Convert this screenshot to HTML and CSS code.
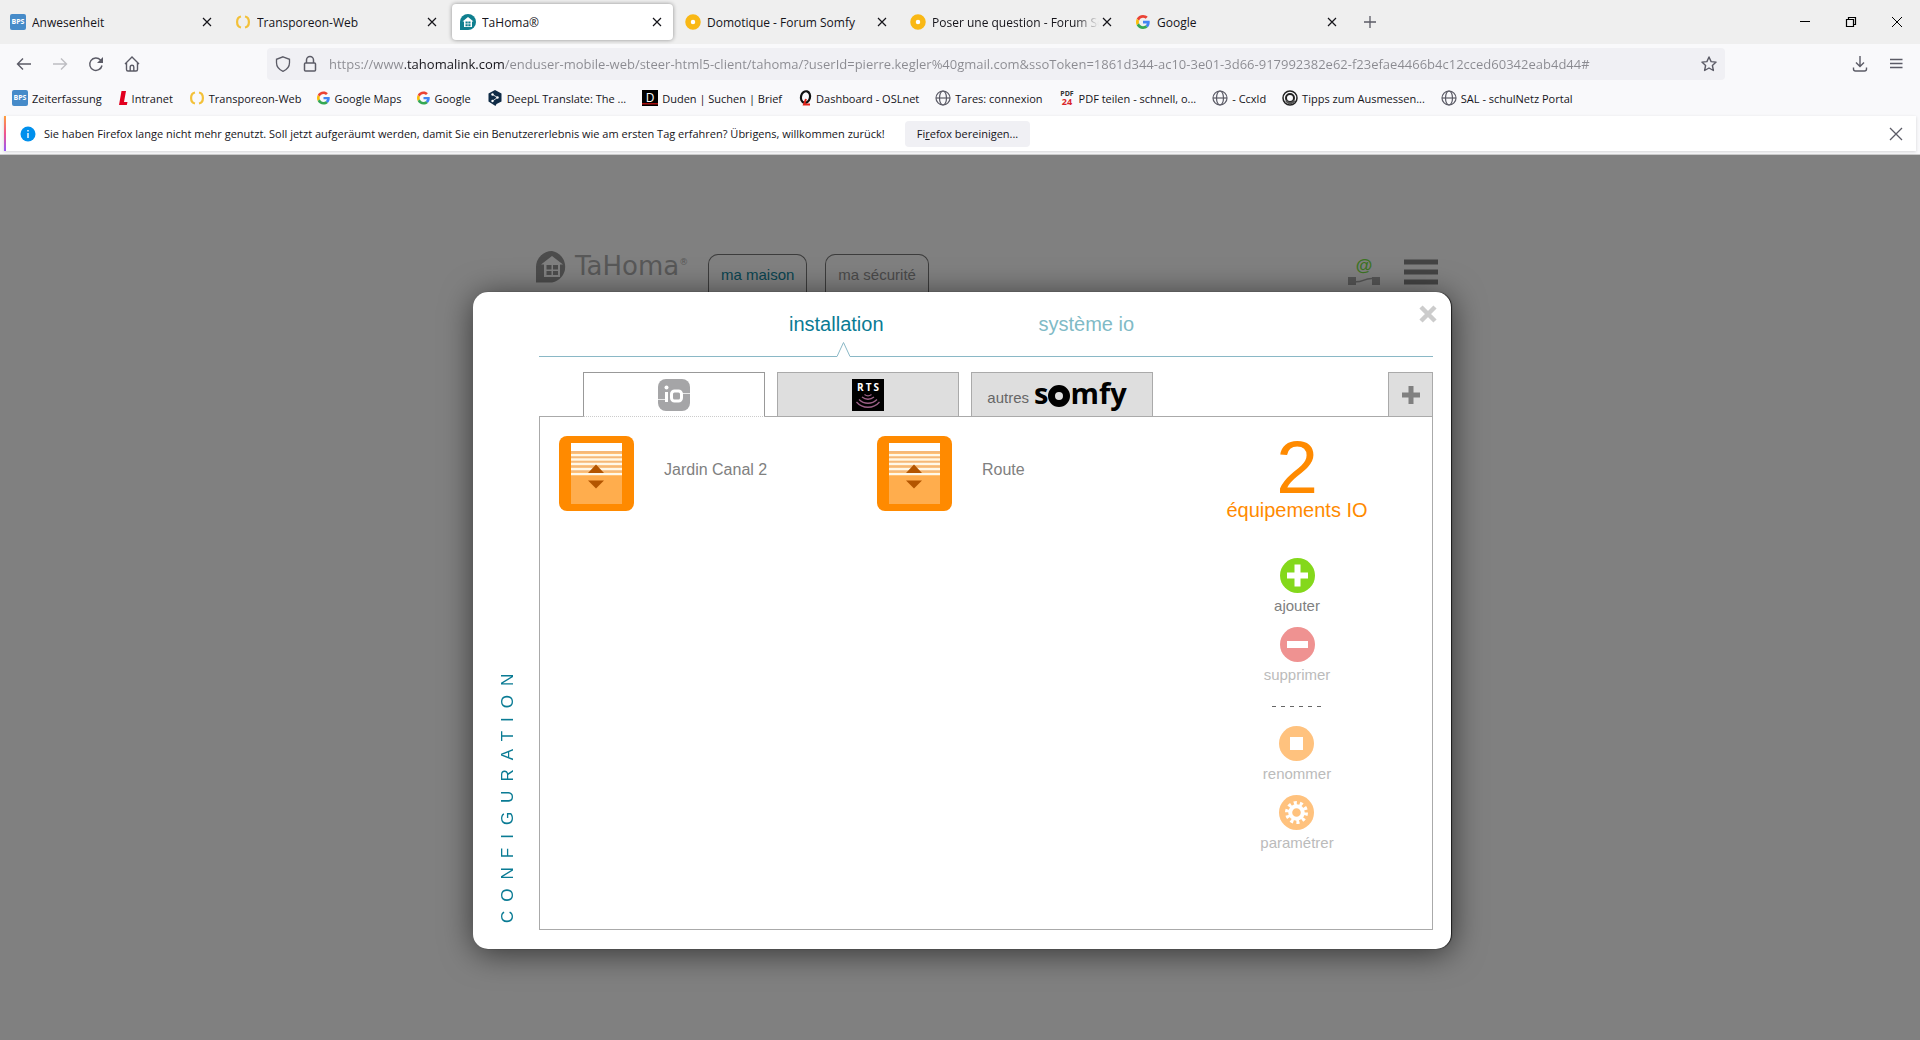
FILE: index.html
```html
<!DOCTYPE html>
<html lang="fr">
<head>
    <meta charset="UTF-8">
    <meta name="viewport" content="width=device-width, initial-scale=1.0">
    <title>TaHoma®</title>
    <link rel="stylesheet" href="styles.css">
</head>
<body>

    <!-- Shared icons -->
    <svg class="sprite" aria-hidden="true">
        <symbol id="bps" viewBox="0 0 16 16">
            <rect width="16" height="16" rx="2" fill="#468bc9"/>
            <text x="8" y="10" text-anchor="middle" font-family="Open Sans" font-weight="700" font-size="7" fill="#fff">BPS</text>
        </symbol>
        <symbol id="transporeon" viewBox="0 0 16 16">
            <path d="M6 2.500C.8 3.500.8 12.500 6 13.500M10 2.500c5.200 1 5.200 10 0 11" fill="none" stroke="#f3c13a" stroke-width="2.200"/>
        </symbol>
        <symbol id="google" viewBox="0 0 48 48">
            <path fill="#ea4335" d="M24 9.500c3.500 0 6.700 1.200 9.200 3.600l6.900-6.900C35.900 2.400 30.500 0 24 0 14.600 0 6.500 5.400 2.600 13.200l8 6.200C12.400 13.700 17.700 9.500 24 9.500z"/>
            <path fill="#4285f4" d="M47 24.500c0-1.600-.2-3.100-.4-4.500H24v9h12.900c-.6 3-2.300 5.500-4.800 7.200l7.700 6C44.400 38 47 31.800 47 24.500z"/>
            <path fill="#fbbc05" d="M10.500 28.600c-.5-1.500-.8-3-.8-4.600s.3-3.100.8-4.600l-8-6.200C.9 16.500 0 20.100 0 24s.9 7.500 2.600 10.800z"/>
            <path fill="#34a853" d="M24 48c6.500 0 11.900-2.100 15.900-5.800l-7.700-6c-2.200 1.400-4.900 2.300-8.200 2.300-6.300 0-11.600-4.200-13.500-9.900l-8 6.200C6.500 42.600 14.600 48 24 48z"/>
        </symbol>
        <symbol id="globe" viewBox="0 0 16 16">
            <g fill="none" stroke="#5b5b66" stroke-width="1.200">
                <circle cx="8" cy="8" r="7"/>
                <ellipse cx="8" cy="8" rx="3.500" ry="7"/>
                <path d="M1 8h14"/>
            </g>
        </symbol>
        <symbol id="somfy" viewBox="0 0 16 16">
            <circle cx="8" cy="8" r="5" fill="#fff" stroke="#f9b815" stroke-width="5.500"/>
        </symbol>
        <symbol id="cross" viewBox="0 0 16 16">
            <path d="M4 4l8 8M12 4l-8 8" fill="none" stroke="currentColor" stroke-width="1.200"/>
        </symbol>
        <symbol id="shutter" viewBox="0 0 75 75">
            <rect width="75" height="75" rx="8" fill="#ff8a00"/>
            <rect x="12" y="7" width="51" height="61" fill="#ffad4d"/>
            <rect x="12" y="7" width="51" height="8" fill="#fff"/>
            <path d="M12 16h51M12 21h51M12 26h51M12 30.500h51M12 35h51" stroke="#f5b877" stroke-width="2"/>
            <path d="M12 19h51M12 23.500h51M12 28h51M12 33h51M12 38h51" stroke="#fff8e8" stroke-width="2.500"/>
            <path d="M29 37l8-8.500 8 8.500zM29 44.500h16l-8 8z" fill="#b35500"/>
        </symbol>
    </svg>

    <!-- Browser tabs -->
    <div class="tab-bar">
        <div class="tab"><svg class="icon"><use href="#bps"/></svg><span class="tab-title">Anwesenheit</span><button class="tab-close" aria-label="Tab schließen"><svg class="icon"><use href="#cross"/></svg></button></div>
        <div class="tab"><svg class="icon"><use href="#transporeon"/></svg><span class="tab-title">Transporeon-Web</span><button class="tab-close" aria-label="Tab schließen"><svg class="icon"><use href="#cross"/></svg></button></div>
        <div class="tab active">
            <svg class="icon" viewBox="0 0 16 16"><path d="M8 0a8 8 0 0 1 0 16H0V8a8 8 0 0 1 8-8z" fill="#0f7f8f"/><path d="M8 3L2.500 7.500h1.500V13h8V7.500h1.500z" fill="#fff"/><path d="M5.500 7.500h2.200v2H5.500zM8.300 7.500h2.200v2H8.300zM5.500 10.200h2.200v2H5.500zM8.300 10.200h2.200v2H8.300z" fill="#0f7f8f"/></svg>
            <span class="tab-title">TaHoma®</span><button class="tab-close" aria-label="Tab schließen"><svg class="icon"><use href="#cross"/></svg></button>
        </div>
        <div class="tab"><svg class="icon"><use href="#somfy"/></svg><span class="tab-title">Domotique - Forum Somfy</span><button class="tab-close" aria-label="Tab schließen"><svg class="icon"><use href="#cross"/></svg></button></div>
        <div class="tab"><svg class="icon"><use href="#somfy"/></svg><span class="tab-title fade">Poser une question - Forum Somfy</span><button class="tab-close" aria-label="Tab schließen"><svg class="icon"><use href="#cross"/></svg></button></div>
        <div class="tab"><svg class="icon google-tab"><use href="#google"/></svg><span class="tab-title">Google</span><button class="tab-close" aria-label="Tab schließen"><svg class="icon"><use href="#cross"/></svg></button></div>
        <button class="new-tab" aria-label="Neuer Tab"><svg class="icon" viewBox="0 0 16 16"><path d="M8 2v12M2 8h12" stroke="#5b5b66" stroke-width="1.300"/></svg></button>
        <div class="window-buttons">
            <button aria-label="Minimieren"><svg class="icon" viewBox="0 0 16 16"><path d="M3 7.500h10" stroke="#000"/></svg></button>
            <button aria-label="Verkleinern"><svg class="icon" viewBox="0 0 16 16"><path d="M3.500 5.500h7v7h-7zM5.500 5.500v-2h7v7h-2" fill="none" stroke="#000" stroke-width="1.200"/></svg></button>
            <button aria-label="Schließen"><svg class="icon" viewBox="0 0 16 16"><path d="M3 3l10 10M13 3L3 13" stroke="#000" stroke-width="1"/></svg></button>
        </div>
    </div>

    <!-- Navigation bar -->
    <div class="nav-bar">
        <div class="nav-buttons">
            <button aria-label="Zurück"><svg class="icon" viewBox="0 0 16 16"><path d="M15 8H1.500M7 2.500L1.500 8 7 13.500" fill="none" stroke="#5b5b66" stroke-width="1.400"/></svg></button>
            <button aria-label="Vor"><svg class="icon" viewBox="0 0 16 16"><path d="M1 8h13.500M9 2.500L14.500 8 9 13.500" fill="none" stroke="#bdbdc2" stroke-width="1.400"/></svg></button>
            <button aria-label="Neu laden"><svg class="icon" viewBox="0 0 16 16"><path d="M14 9.500A6.200 6.200 0 1 1 12.500 4L14 5.500" fill="none" stroke="#5b5b66" stroke-width="1.400"/><path d="M15 1v6H9z" fill="#5b5b66"/></svg></button>
            <button aria-label="Startseite"><svg class="icon" viewBox="0 0 16 16"><path d="M1 8l7-7 7 7M2.500 7v6.500a1.500 1.500 0 0 0 1.500 1.500h8a1.500 1.500 0 0 0 1.500-1.500V7M6.200 15v-4a1.800 1.800 0 0 1 3.600 0v4" fill="none" stroke="#5b5b66" stroke-width="1.400"/></svg></button>
        </div>
        <div class="url-bar">
            <svg class="icon" viewBox="0 0 16 16"><path d="M8 .8l6.500 2.500v3.500c0 4-3 7-6.500 8.500-3.500-1.500-6.500-4.500-6.500-8.500V3.300z" fill="none" stroke="#5b5b66" stroke-width="1.300"/></svg>
            <svg class="icon" viewBox="0 0 16 16"><path d="M4.500 7V4a3.500 3.500 0 0 1 7 0v3M3.500 7h9a1 1 0 0 1 1 1v6a1 1 0 0 1-1 1h-9a1 1 0 0 1-1-1V8a1 1 0 0 1 1-1z" fill="none" stroke="#5b5b66" stroke-width="1.500"/></svg>
            <input class="url-input" type="text" aria-label="Adresse" value="https://www.tahomalink.com/enduser-mobile-web/steer-html5-client/tahoma/?userId=pierre.kegler%40gmail.com&amp;ssoToken=1861d344-ac10-3e01-3d66-917992382e62-f23efae4466b4c12cced60342eab4d44#">
            <button aria-label="Lesezeichen hinzufügen"><svg class="icon" viewBox="0 0 16 16"><path d="M8 1l2.100 4.600 5 .5-3.700 3.400 1 5L8 12l-4.400 2.500 1-5L.9 6.100l5-.5z" fill="none" stroke="#5b5b66" stroke-width="1.400" stroke-linejoin="round"/></svg></button>
        </div>
        <div class="nav-tools">
            <button aria-label="Downloads"><svg class="icon" viewBox="0 0 16 16"><path d="M8 0v10.500M4 6.500l4 4 4-4M1.500 11.500V13a2 2 0 0 0 2 2h9a2 2 0 0 0 2-2v-1.500" fill="none" stroke="#5b5b66" stroke-width="1.400"/></svg></button>
            <button aria-label="Menü"><svg class="icon" viewBox="0 0 16 16"><path d="M2 3.500h12.500M2 7.500h12.500M2 11.500h12.500" stroke="#5b5b66" stroke-width="1.300"/></svg></button>
        </div>
    </div>

    <!-- Bookmarks -->
    <nav class="bookmarks">
        <a href="#"><svg class="icon"><use href="#bps"/></svg>Zeiterfassung</a>
        <a href="#"><svg class="icon narrow" viewBox="0 0 10 16"><path d="M3.500 1H8L6 12h3.500l-.7 3H1z" fill="#e2001f"/></svg>Intranet</a>
        <a href="#"><svg class="icon"><use href="#transporeon"/></svg>Transporeon-Web</a>
        <a href="#"><svg class="icon small"><use href="#google"/></svg>Google Maps</a>
        <a href="#"><svg class="icon small"><use href="#google"/></svg>Google</a>
        <a href="#"><svg class="icon" viewBox="0 0 16 16"><path d="M8 0l6.500 3.500v8L9.500 14l-1 2L1.500 11.500v-8z" fill="#0f2b46"/><path d="M5.500 4.500l5 3-5 3.500" fill="none" stroke="#fff" stroke-width=".8"/><circle cx="5.500" cy="4.500" r="1.200" fill="#fff"/><circle cx="10.500" cy="7.500" r="1.200" fill="#fff"/><circle cx="5.500" cy="11" r="1.200" fill="#fff"/></svg>DeepL Translate: The ...</a>
        <a href="#"><svg class="icon" viewBox="0 0 16 16"><path d="M0 0h16v16H0z"/><path d="M0 13h16v1.500H0z" fill="#a11"/><text x="8" y="12" text-anchor="middle" font-family="Open Sans" font-size="12" fill="#fff">D</text></svg>Duden | Suchen | Brief</a>
        <a href="#"><svg class="icon narrow-q" viewBox="0 0 14 16"><ellipse cx="7.500" cy="7" rx="4.500" ry="5.800" transform="rotate(15 7.500 7)" fill="none" stroke="#111" stroke-width="2.200"/><path d="M8 9l-2 5.500h6" fill="none" stroke="#e2231a" stroke-width="2"/></svg>Dashboard - OSLnet</a>
        <a href="#"><svg class="icon"><use href="#globe"/></svg>Tares: connexion</a>
        <a href="#"><svg class="icon" viewBox="0 0 16 16"><text x="8" y="6" text-anchor="middle" font-family="Open Sans" font-weight="700" font-size="7" fill="#333">PDF</text><text x="8" y="15" text-anchor="middle" font-family="Open Sans" font-weight="700" font-size="9" fill="#d9252a">24</text></svg>PDF teilen - schnell, o...</a>
        <a href="#"><svg class="icon"><use href="#globe"/></svg>- Ccxld</a>
        <a href="#"><svg class="icon" viewBox="0 0 16 16"><g fill="none" stroke="#222"><circle cx="8" cy="8" r="7" stroke-width="1.500"/><circle cx="8" cy="8" r="4" stroke-width="2"/><path d="M4 10.500a4.800 4.800 0 0 0 8.500 0" stroke="#555" stroke-width="2"/></g></svg>Tipps zum Ausmessen...</a>
        <a href="#"><svg class="icon"><use href="#globe"/></svg>SAL - schulNetz Portal</a>
    </nav>

    <!-- Notification -->
    <div class="notice-wrap">
        <div class="notice">
            <svg class="icon" viewBox="0 0 16 16"><circle cx="8" cy="8" r="7.500" fill="#0090ed"/><path d="M8 4v1.500M8 7v5" stroke="#fff" stroke-width="1.400"/></svg>
            <span>Sie haben Firefox lange nicht mehr genutzt. Soll jetzt aufgeräumt werden, damit Sie ein Benutzererlebnis wie am ersten Tag erfahren? Übrigens, willkommen zurück!</span>
            <button class="refresh">Fi<u>r</u>efox bereinigen...</button>
            <button class="notice-close" aria-label="Schließen"><svg class="icon" viewBox="0 0 16 16"><path d="M2 2l12 12M14 2L2 14" stroke="#5b5b66" stroke-width="1.300"/></svg></button>
        </div>
    </div>

    <!-- TaHoma application -->
    <main class="app">
        <div class="stage">
            <header class="app-header">
                <div class="brand">
                    <svg class="brand-logo" viewBox="0 0 32 32"><path d="M16 0a16 16 0 0 1 0 31.500H0V16A16 16 0 0 1 16 0z" fill="#4c4c4c"/><path d="M16 5L5 13.500h3V26h16V13.500h3z" fill="#808080"/><path d="M10.500 14h5v4.500h-5zM17 14h5v4.500h-5zM10.500 20h5v4h-5zM17 20h5v4h-5z" fill="#4c4c4c"/></svg>
                    <span class="brand-name">TaHoma<sup>®</sup></span>
                </div>
                <a href="#" class="app-tab current">ma maison</a>
                <a href="#" class="app-tab">ma sécurité</a>
                <div class="header-tools">
                    <svg class="net-icon" viewBox="0 0 32 28"><text x="16" y="13" text-anchor="middle" font-family="Liberation Sans" font-weight="700" font-size="17" fill="#3d7423">@</text><path d="M4 23c10 4 12-5 24-2" fill="none" stroke="#555" stroke-width="1.500"/><path d="M0 19h8v8H0zM24 19h8v8h-8z" fill="#555"/></svg>
                    <button aria-label="menu"><svg class="menu-icon" viewBox="0 0 34 26"><path d="M0 3h34M0 13h34M0 23h34" stroke="#444" stroke-width="5"/></svg></button>
                </div>
            </header>

            <section class="modal" role="dialog" aria-label="configuration">
                <h1 class="side-title">CONFIGURATION</h1>
                <div class="modal-body">
                    <nav class="sections">
                        <a href="#" class="selected">installation</a>
                        <a href="#">système io</a>
                    </nav>
                    <div class="divider">
                        <span></span>
                        <svg class="notch" viewBox="0 0 13 15"><path d="M0 14.500L6.500 .5 13 14.500" fill="none" stroke="#8ab8c6"/></svg>
                        <span></span>
                    </div>

                    <div class="types">
                        <button class="type open" aria-label="io"><svg class="type-icon" viewBox="0 0 32 32"><rect width="32" height="32" rx="8" fill="#a5a5a7"/><path d="M0 20.500h9M24 14.500h8" stroke="#e8e8e8"/><path d="M8.500 13v10" stroke="#fff" stroke-width="3"/><rect x="13.500" y="12" width="10" height="10" rx="3" fill="none" stroke="#fff" stroke-width="3"/><circle cx="8.500" cy="8.500" r="2" fill="#fff"/></svg></button>
                        <button class="type" aria-label="RTS"><svg class="type-icon" viewBox="0 0 32 32"><path d="M0 0h32v32H0z"/><text x="17" y="12" text-anchor="middle" font-family="Open Sans" font-weight="700" font-size="10" letter-spacing="2" fill="#fff">RTS</text><g fill="none" stroke="#9b5f86" stroke-width="1.300"><path d="M12.500 15.500c2 1.500 5 1.500 7 0M10 18c3.500 3 8.500 3 12 0M7 20.500c5 5 13 5 18 0M4.500 23c6 7 17 7 23 0"/></g></svg></button>
                        <button class="type others">autres <span class="somfy">s<svg class="somfy-o" viewBox="0 0 22 22"><circle cx="11" cy="11" r="7.500" fill="none" stroke="#000" stroke-width="7"/></svg>mfy</span></button>
                        <button class="type add" aria-label="ajouter un type"><svg class="icon" viewBox="0 0 18 18"><path d="M9 0v18M0 9h18" stroke="#808080" stroke-width="5"/></svg></button>
                    </div>

                    <div class="panel">
                        <ul class="devices">
                            <li><svg class="device-icon"><use href="#shutter"/></svg>Jardin Canal 2</li>
                            <li><svg class="device-icon"><use href="#shutter"/></svg>Route</li>
                        </ul>
                        <aside class="actions">
                            <strong class="count">2</strong>
                            <span class="count-label">équipements IO</span>
                            <button class="action"><svg class="action-icon" viewBox="0 0 35 35"><circle cx="17.500" cy="17.500" r="17.500" fill="#84d81b"/><path d="M17.500 6.500v22M7 17.500h21" stroke="#fff" stroke-width="6"/></svg>ajouter</button>
                            <button class="action off"><svg class="action-icon" viewBox="0 0 35 35"><circle cx="17.500" cy="17.500" r="17.500" fill="#ef9291"/><path d="M7 17.500h21" stroke="#fff" stroke-width="7"/></svg>supprimer</button>
                            <svg class="dashes" viewBox="0 0 50 1"><path d="M0 .5h50" stroke="#666" stroke-dasharray="4 5"/></svg>
                            <button class="action off"><svg class="action-icon" viewBox="0 0 35 35"><circle cx="17.500" cy="17.500" r="17.500" fill="#ffc27e"/><path d="M11 11h13v13H11z" fill="#fff"/></svg>renommer</button>
                            <button class="action off"><svg class="action-icon" viewBox="0 0 35 35"><circle cx="17.500" cy="17.500" r="17.500" fill="#ffc27e"/><circle cx="17.500" cy="17.500" r="6.300" fill="none" stroke="#fff" stroke-width="4"/><circle cx="17.500" cy="17.500" r="9.500" fill="none" stroke="#fff" stroke-width="4" stroke-dasharray="3 2.970"/></svg>paramétrer</button>
                        </aside>
                    </div>
                </div>
                <button class="modal-close" aria-label="fermer"><svg class="icon" viewBox="0 0 18 18"><path d="M2 2l14 14M16 2L2 16" stroke="#ccc" stroke-width="4.500"/></svg></button>
            </section>
        </div>
    </main>

</body>
</html>
```
FILE: styles.css
```css
/* General Styles */
* {
    box-sizing: border-box;
}

body {
    margin: 0;
    min-height: 100vh;
    display: flex;
    flex-direction: column;
    font-family: "Open Sans", sans-serif;
    font-size: 12px;
    color: #15141a;
    background-color: #f9f9fb;
}

button {
    display: flex;
    align-items: center;
    justify-content: center;
    padding: 0;
    border: none;
    background: none;
    font: inherit;
    color: inherit;
    cursor: pointer;
}

a {
    color: inherit;
    text-decoration: none;
}

.sprite {
    display: none;
}

.icon {
    width: 16px;
    height: 16px;
    flex: none;
    display: block;
    overflow: visible;
}

/* Browser tabs */
.tab-bar {
    display: flex;
    align-items: center;
    height: 44px;
    background-color: #efefef;
}

.tab {
    display: flex;
    align-items: center;
    gap: 6px;
    width: 221px;
    height: 36px;
    margin: 0 2px;
    padding: 0 8px;
    border-radius: 4px;
}

.tab.active {
    background-color: #fff;
    box-shadow: 0 0 4px rgba(0, 0, 0, 0.4);
}

.tab-title {
    flex: 1;
    overflow: hidden;
    white-space: nowrap;
}

.tab-title.fade {
    margin-right: -6px;
    mask-image: linear-gradient(to left, transparent, #000 24px);
}

.google-tab {
    padding: 1px;
}

.new-tab {
    width: 40px;
    height: 36px;
}

.window-buttons {
    display: flex;
    margin-left: auto;
}

.window-buttons button {
    width: 46px;
    height: 36px;
}

/* Navigation bar */
.nav-bar {
    display: flex;
    align-items: center;
    height: 40px;
    padding: 0 6px;
}

.nav-buttons,
.nav-tools {
    display: flex;
}

.nav-buttons button,
.nav-tools button {
    width: 36px;
    height: 32px;
}

.url-bar {
    display: flex;
    align-items: center;
    gap: 11px;
    flex: 1;
    height: 32px;
    margin: 0 117px;
    padding: 0 8px;
    border-radius: 4px;
    background-color: #f0f0f4;
}

/* The domain is darker than the rest of the address */
.url-input {
    flex: 1;
    min-width: 0;
    padding: 0;
    border: none;
    outline: none;
    font-family: "Open Sans", sans-serif;
    font-size: 13px;
    color: #8a8a90;
    background: linear-gradient(to right, #8a8a90 76px, #15141a 76px, #15141a 175px, #8a8a90 175px);
    background-clip: text;
    -webkit-background-clip: text;
    -webkit-text-fill-color: transparent;
}

/* Bookmarks */
.bookmarks {
    display: flex;
    align-items: center;
    gap: 16px;
    height: 32px;
    padding: 0 12px 4px;
    font-size: 11px;
    white-space: nowrap;
}

.bookmarks a {
    display: flex;
    align-items: center;
    gap: 4px;
}

.bookmarks .narrow {
    width: 10px;
}

.bookmarks .small {
    width: 13px;
}

.bookmarks .narrow-q {
    width: 14px;
}

/* Notification */
.notice-wrap {
    padding: 0 4px 3px;
    border-bottom: 1px solid #ccc;
    font-size: 11px;
}

.notice {
    display: flex;
    align-items: center;
    gap: 8px;
    height: 35px;
    padding: 0 12px 0 14px;
    border-left: 2px solid;
    border-image: linear-gradient(#ffa436, #f0548e, #9059ff) 1;
    background-color: #fff;
    box-shadow: 0 1px 3px rgba(0, 0, 0, 0.15);
}

.refresh {
    height: 26px;
    margin-left: 12px;
    padding: 0 12px;
    border-radius: 4px;
    background-color: #f0f0f4;
}

.notice-close {
    margin-left: auto;
}

/* Application */
.app {
    flex: 1;
    padding: 96px 0 40px 4px;
    background-color: #808080;
    font-family: "Liberation Sans", sans-serif;
    font-size: 15px;
}

.stage {
    max-width: 978px;
    margin: 0 auto;
}

.app-header {
    display: flex;
    height: 41px;
    padding: 0 13px 0 63px;
    color: #4a4a4a;
}

.brand {
    display: flex;
    gap: 7px;
    width: 172px;
}

.brand-logo {
    width: 32px;
    height: 32px;
}

.brand-name {
    font-family: "DejaVu Sans", sans-serif;
    font-size: 26px;
    line-height: 30px;
    color: #585858;
}

.brand-name sup {
    font-size: 9px;
    line-height: 0;
    vertical-align: 10px;
}

.app-tab {
    margin: 3px 18px 0 0;
    padding: 0 12px;
    border: 1px solid #3c3c3c;
    border-bottom: none;
    border-radius: 10px 10px 0 0;
    line-height: 40px;
}

.app-tab.current {
    color: #0a4450;
}

.header-tools {
    display: flex;
    align-items: center;
    gap: 24px;
    margin-left: auto;
}

.net-icon {
    width: 32px;
    height: 28px;
    overflow: visible;
}

.menu-icon {
    width: 34px;
    height: 26px;
}

/* Modal */
.modal {
    position: relative;
    display: flex;
    min-height: 657px;
    padding: 0 18px 19px 0;
    border-radius: 15px;
    background-color: #fff;
    box-shadow: 1px 4px 32px rgba(0, 0, 0, 0.6), 1px 0 1px rgba(0, 0, 0, 0.7);
}

.side-title {
    width: 66px;
    margin: 0;
    padding-top: 7px;
    line-height: 70px;
    font-size: 17px;
    font-weight: normal;
    letter-spacing: 9px;
    color: #0a7b94;
    writing-mode: vertical-rl;
    transform: rotate(180deg);
}

.modal-body {
    flex: 1;
    min-width: 0;
    display: flex;
    flex-direction: column;
}

.modal-close {
    position: absolute;
    top: 13px;
    right: 14px;
}

.modal-close .icon,
.add .icon {
    width: 18px;
    height: 18px;
}

.sections {
    display: flex;
    gap: 155px;
    padding: 21px 0 6px 250px;
    font-size: 20px;
    line-height: 23px;
    color: #80bac6;
}

.sections .selected {
    color: #0a7b94;
}

.divider {
    display: flex;
    align-items: flex-end;
}

.divider span {
    width: 298px;
    border-bottom: 1px solid #8ab8c6;
}

.divider span:last-child {
    flex: 1;
}

.notch {
    width: 13px;
    height: 15px;
}

/* Product type tabs */
.types {
    display: flex;
    gap: 12px;
    margin-top: 15px;
    padding-left: 44px;
}

.type {
    width: 182px;
    height: 45px;
    margin-bottom: -1px;
    border: 1px solid #aaa;
    background-color: #dedede;
    color: #666;
}

.type.open {
    border-color: #999;
    border-bottom: 1px dotted #ccc;
    background-color: #fff;
    position: relative;
}

.type.others {
    padding: 5px 10px 0 0;
}

.type.add {
    width: 45px;
    margin-left: auto;
}

.type-icon {
    width: 32px;
    height: 32px;
}

.somfy {
    display: flex;
    align-items: center;
    margin: 0 0 8px 5px;
    font-family: "Open Sans", sans-serif;
    font-size: 29px;
    font-weight: bold;
    line-height: 28px;
    color: #000;
}

.somfy-o {
    width: 22px;
    height: 22px;
    margin-top: 5px;
}

/* Device panel */
.panel {
    flex: 1;
    display: flex;
    justify-content: space-between;
    border: 1px solid #aaa;
}

.devices {
    display: flex;
    margin: 0;
    padding: 19px 0 19px 19px;
    list-style: none;
    font-size: 16px;
    line-height: 68px;
    color: #808080;
}

.devices li {
    display: flex;
    gap: 30px;
    width: 318px;
}

.devices li:last-child {
    width: auto;
}

.device-icon {
    width: 75px;
    height: 75px;
}

.actions {
    display: flex;
    flex-direction: column;
    align-items: center;
    width: 270px;
    padding-top: 18px;
    color: #808080;
}

.count {
    font-size: 75px;
    font-weight: normal;
    line-height: 64px;
    color: #ff8a00;
}

.count-label {
    margin-bottom: 36px;
    font-size: 20px;
    line-height: 23px;
    color: #ff8a00;
}

.action {
    flex-direction: column;
    gap: 4px;
    height: 57px;
    margin-bottom: 12px;
    line-height: 18px;
}

.action.off {
    color: #bbb;
}

.action-icon {
    width: 35px;
    height: 35px;
}

.dashes {
    width: 50px;
    height: 1px;
    margin: 10px 0 19px;
}
```
